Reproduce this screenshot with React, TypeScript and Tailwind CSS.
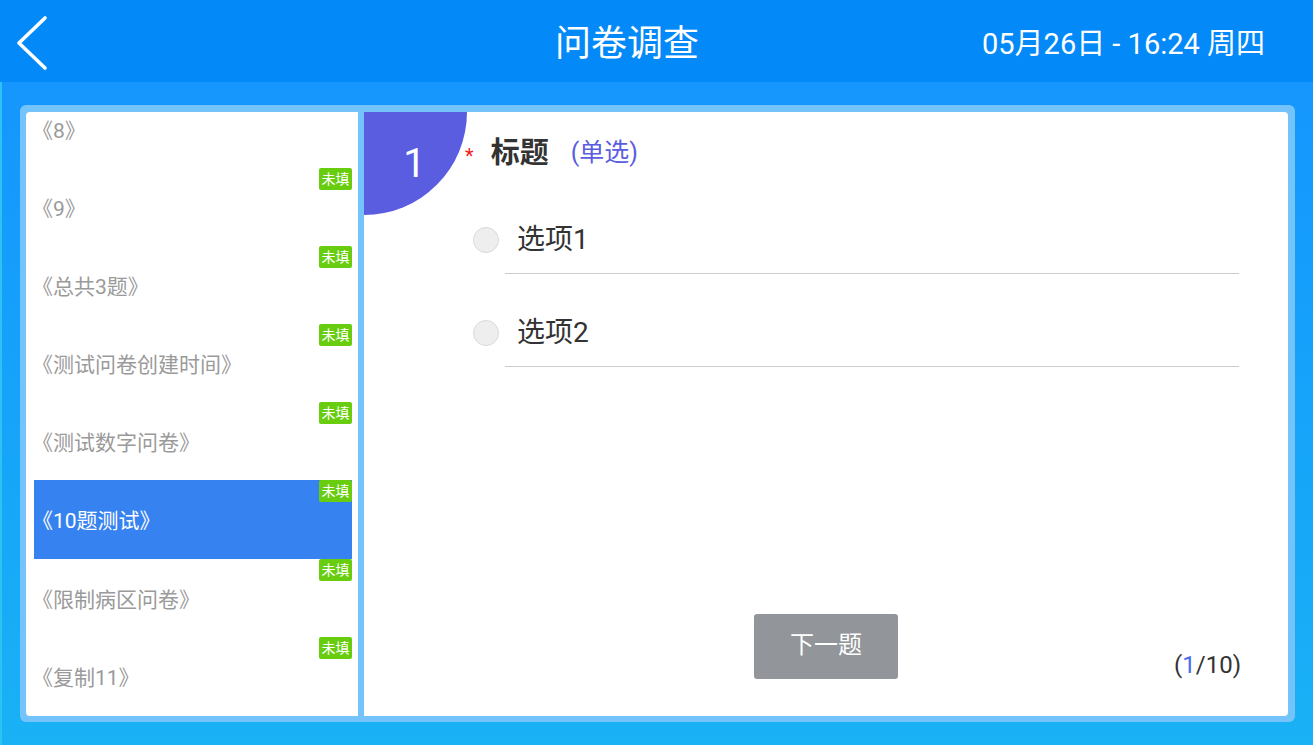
import React from 'react';

const font = "font-['Roboto','Noto_Sans_CJK_SC',sans-serif]";

const surveys = [
  { name: '《8》' },
  { name: '《9》' },
  { name: '《总共3题》' },
  { name: '《测试问卷创建时间》' },
  { name: '《测试数字问卷》' },
  { name: '《10题测试》', active: true },
  { name: '《限制病区问卷》' },
  { name: '《复制11》' },
];

const options = ['选项1', '选项2'];

function BackIcon() {
  return (
    <svg width="34" height="56" viewBox="0 0 34 56" fill="none">
      <polyline points="29,3 3,28 29,53" stroke="white" strokeWidth="3.6" strokeLinecap="round" strokeLinejoin="round" />
    </svg>
  );
}

function SurveyList() {
  return (
    <div className="w-[332px] bg-white rounded-tl-[4px] rounded-bl-[4px] overflow-hidden">
      <div className="-mt-[22px]">
        {surveys.map((s, i) => (
          <div
            key={s.name}
            className={`relative h-[78px] ml-[8px] mr-[6px] flex items-center ${i === 5 ? 'h-[79px]' : ''} ${s.active ? 'bg-[#3682f1]' : ''}`}
          >
            {i > 0 && (
              <span className="absolute top-0 right-0 h-[22px] w-[33px] rounded-[2px] bg-[#68cc0f] text-white text-[14px] leading-[22px] text-center">
                未填
              </span>
            )}
            <span className={`-ml-[2px] text-[21px] leading-none pt-[4px] ${s.active ? 'text-white' : 'text-[#9a9a9a]'}`}>{s.name}</span>
          </div>
        ))}
      </div>
    </div>
  );
}

function QuestionPanel() {
  return (
    <div className="relative flex-1 flex flex-col bg-white rounded-tr-[4px] rounded-br-[4px] overflow-hidden">
      <div className="absolute top-0 left-0 w-[103px] h-[103px] rounded-br-full bg-[#5b5de1] flex items-center justify-center">
        <span className="text-white text-[40px] leading-none pr-[2px]">1</span>
      </div>

      <div className="pl-[101px] pt-[24px] h-[58px] flex items-center">
        <span className="text-[#f21c1c] text-[20px] leading-none self-start mt-[10px]">*</span>
        <span className="ml-[17px] text-[29px] font-bold text-[#333] leading-[34px]">标题</span>
        <span className="ml-[22px] text-[25px] text-[#5b5de1] leading-[34px]">(单选)</span>
      </div>

      <div className="mt-[37px] pl-[109px] pr-[49px] flex flex-col gap-[26px]">
        {options.map((o) => (
          <div key={o} className="flex items-start">
            <span className="mt-[20px] w-[26px] h-[26px] rounded-full bg-[#eeeeee] border border-[#d9d9d9]" />
            <div className="ml-[6px] flex-1 h-[67px] border-b border-[#cccccc] flex items-center pl-[12px]">
              <span className="text-[28px] text-[#333] leading-none">{o}</span>
            </div>
          </div>
        ))}
      </div>

      <div className="flex-1" />

      <div className="grid grid-cols-[1fr_auto_1fr] pb-[37px]">
        <div />
        <button className="w-[144px] h-[65px] rounded-[3px] bg-[#929599] text-white text-[24px] pb-[4px]">下一题</button>
        <div className="self-end flex justify-end pr-[47px]">
          <span className="text-[24px] leading-[28px] text-[#333]">
            (<span className="text-[#4b6af0]">1</span>/10)
          </span>
        </div>
      </div>
    </div>
  );
}

export default function App() {
  return (
    <div className={`w-[1313px] h-[745px] flex flex-col overflow-hidden ${font}`}>
      <header className="h-[82px] bg-[#0389f8] flex items-center text-white">
        <div className="pl-[16px] pt-[4px] w-[60px] flex items-center">
          <BackIcon />
        </div>
        <h1 className="ml-[495px] text-[36px] leading-none pt-[6px]">问卷调查</h1>
        <div className="ml-auto pr-[48px] text-[29px] leading-none pt-[6px]">05月26日 - 16:24 周四</div>
      </header>

      <main className="flex-1 bg-gradient-to-b from-[#1596fe] to-[#1ab1f5] border-l-[2px] border-[#2cc3f3] pl-[18px] pr-[18px] pt-[23px] pb-[23px]">
        <div className="h-full bg-[#74c4fb] rounded-[6px] pt-[7px] pb-[6px] pl-[6px] pr-[7px] flex gap-[6px]">
          <SurveyList />
          <QuestionPanel />
        </div>
      </main>
    </div>
  );
}
